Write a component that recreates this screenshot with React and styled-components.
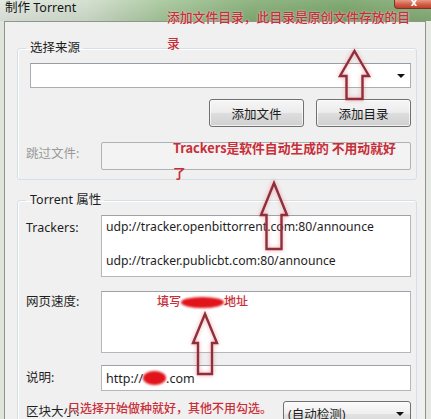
import React from "react";
import styled, { createGlobalStyle } from "styled-components";

const GlobalStyle = createGlobalStyle`
  html, body {
    margin: 0;
    padding: 0;
    background: #f0f0f0;
  }
`;

const UI_FONT = `"Noto Sans", "Noto Sans CJK SC", sans-serif`;
const NOTE_RED = "#c4303a";

// 窗口外框
const Window = styled.div`
  position: relative;
  width: 431px;
  height: 419px;
  overflow: hidden;
  display: flex;
  flex-direction: column;
  background: linear-gradient(90deg, #dfe4dc 0%, #cfd9cb 60%, #e6e9e4 100%);
  font-family: ${UI_FONT};
  font-size: 12px;
  color: #1e1e1e;
`;

const TitleBar = styled.div`
  height: 21px;
  flex-shrink: 0;
  display: flex;
  justify-content: space-between;
  align-items: flex-start;
  background:
    linear-gradient(180deg, rgba(255, 255, 255, 0.12), rgba(0, 0, 0, 0.05)),
    linear-gradient(90deg, #e0e5dd 0%, #cfdccb 20%, #a3c497 38%, #83ac74 58%, #74a164 80%, #84ab77 100%);
`;

const Title = styled.span`
  padding-left: 5px;
  line-height: 16px;
  font-size: 12.5px;
  color: #151515;
`;

const CloseButton = styled.span`
  width: 38px;
  height: 8px;
  margin-right: -3px;
  border: 1px solid #7e3326;
  border-top: none;
  border-radius: 0 0 4px 4px;
  background: linear-gradient(180deg, #e79a86 0%, #cf5a43 60%, #bf412c 100%);
  color: #fff;
  font: bold 10px/6px "DejaVu Sans", sans-serif;
  text-align: center;
  overflow: hidden;
`;

const Client = styled.div`
  flex: 1;
  margin: 0 5px 0 4px;
  border: 1px solid #8c978a;
  border-bottom: none;
  background: #f0f0f0;
  padding: 18px 8px 0 12px;
  display: flex;
  flex-direction: column;
`;

const Group = styled.fieldset`
  margin: ${(p) => (p.$first ? "0" : "12px 0 0")};
  border: 1px solid #d5dfe5;
  border-radius: 3px;
  padding: ${(p) => (p.$first ? "7px 5px 9px 8px" : "7px 5px 0 8px")};
  box-shadow: inset 1px 1px 0 #fff;
  min-width: 0;
`;

const Legend = styled.legend`
  padding: 0 3px 0 4px;
  font-size: 12.5px;
  line-height: 16px;
  color: #1e1e1e;
`;

const ComboBox = styled.div`
  height: 25px;
  margin-left: 4px;
  box-sizing: border-box;
  border: 1px solid #abadb3;
  border-top-color: #9a9ca3;
  background: #fff;
  display: flex;
  align-items: center;
  justify-content: flex-end;
  padding-right: 5px;
`;

const Caret = styled.span`
  width: 0;
  height: 0;
  border-left: 4px solid transparent;
  border-right: 4px solid transparent;
  border-top: 4px solid #111;
`;

const ButtonRow = styled.div`
  margin-top: 11px;
  display: flex;
  justify-content: flex-end;
  gap: 12px;
`;

const Button = styled.div`
  width: 95px;
  height: 28px;
  box-sizing: border-box;
  border: 1px solid #707070;
  border-radius: 3px;
  background: linear-gradient(180deg, #f6f6f6 0%, #ececec 48%, #dddddd 52%, #d0d0d0 100%);
  box-shadow: inset 0 0 0 1px rgba(255, 255, 255, 0.7);
  display: flex;
  align-items: center;
  justify-content: center;
  font-size: 12.5px;
  color: #1b1b1b;
`;

const Row = styled.div`
  margin-top: ${(p) => p.$gap || 0}px;
  display: flex;
  align-items: flex-start;
`;

const Label = styled.div`
  width: 75px;
  flex-shrink: 0;
  padding-top: ${(p) => p.$top || 0}px;
  line-height: 17px;
  font-size: 12.5px;
  color: ${(p) => (p.$disabled ? "#9a9a9a" : "#1e1e1e")};
`;

const DisabledBox = styled.div`
  flex: 1;
  height: 28px;
  box-sizing: border-box;
  border: 1px solid #adb2b5;
  border-radius: 2px;
  background: #f3f3f3;
`;

const TextArea = styled.textarea`
  display: block;
  flex: 1;
  height: ${(p) => p.$h}px;
  box-sizing: border-box;
  margin: 0;
  border: 1px solid #b5b7bd;
  border-top-color: #9fa1a8;
  background: #fff;
  padding: 2px 4px;
  font-family: ${UI_FONT};
  font-size: 12.2px;
  line-height: 17px;
  color: #1e1e1e;
  resize: none;
  overflow: hidden;
  outline: none;
`;

const LineBox = styled.div`
  flex: 1;
  height: 26px;
  box-sizing: border-box;
  border: 1px solid #b5b7bd;
  border-top-color: #9fa1a8;
  background: #fff;
  padding: 0 4px;
  display: flex;
  align-items: center;
  font-size: 12.5px;
`;

const SelectBox = styled.div`
  margin-left: auto;
  width: 128px;
  height: 25px;
  box-sizing: border-box;
  border: 1px solid #707070;
  border-radius: 3px;
  background: linear-gradient(180deg, #fbfbfb 0%, #efefef 50%, #e2e2e2 51%, #d6d6d6 100%);
  display: flex;
  align-items: center;
  justify-content: space-between;
  padding: 0 6px 0 4px;
  font-size: 12.5px;
`;

// 红色涂抹
const Blob = styled.span`
  display: inline-block;
  width: ${(p) => p.$w}px;
  height: ${(p) => p.$h}px;
  border-radius: 50%;
  background: #e0141a;
  filter: blur(0.8px);
  vertical-align: middle;
`;

// 标注文字
const Note = styled.div`
  position: absolute;
  left: ${(p) => p.$x}px;
  top: ${(p) => p.$y}px;
  white-space: nowrap;
  font-family: "Noto Sans CJK SC", "Noto Sans", sans-serif;
  font-size: ${(p) => p.$size || 12.8}px;
  font-weight: ${(p) => (p.$bold ? 700 : 500)};
  line-height: ${(p) => p.$lh || 17}px;
  color: ${NOTE_RED};
  text-shadow: 0 0 2px rgba(255, 235, 235, 0.9);
`;

const ArrowSvg = styled.svg`
  position: absolute;
  left: ${(p) => p.$x}px;
  top: ${(p) => p.$y}px;
  overflow: visible;
  filter: drop-shadow(0 0 2px rgba(235, 120, 130, 0.7));
`;

const UpArrow = ({ x, y, w, h, head, shaft }) => {
  const m = w / 2;
  const s = shaft / 2;
  const d = `M${m} 1 L${w - 1} ${head} L${m + s} ${head} L${m + s} ${h - 1} L${m - s} ${h - 1} L${m - s} ${head} L1 ${head} Z`;
  return (
    <ArrowSvg $x={x} $y={y} width={w} height={h} viewBox={`0 0 ${w} ${h}`}>
      <path d={d} fill="none" stroke="#8e2f3b" strokeWidth="2.4" strokeLinejoin="miter" />
    </ArrowSvg>
  );
};

const trackers =
  "udp://tracker.openbittorrent.com:80/announce\n\nudp://tracker.publicbt.com:80/announce";

export default function App() {
  return (
    <Window>
      <GlobalStyle />
      <TitleBar>
        <Title>制作 Torrent</Title>
        <CloseButton>x</CloseButton>
      </TitleBar>

      <Client>
        <Group $first>
          <Legend>选择来源</Legend>
          <ComboBox>
            <Caret />
          </ComboBox>
          <ButtonRow>
            <Button>添加文件</Button>
            <Button>添加目录</Button>
          </ButtonRow>
          <Row $gap={15}>
            <Label $disabled $top={3}>跳过文件:</Label>
            <DisabledBox />
          </Row>
        </Group>

        <Group>
          <Legend>Torrent 属性</Legend>
          <Row>
            <Label $top={4}>Trackers:</Label>
            <TextArea $h={62} readOnly value={trackers} />
          </Row>
          <Row $gap={14}>
            <Label $top={2}>网页速度:</Label>
            <TextArea $h={62} readOnly value="" />
          </Row>
          <Row $gap={12}>
            <Label $top={4}>说明:</Label>
            <LineBox>
              http://
              <Blob $w={23} $h={14} />
              .com
            </LineBox>
          </Row>
          <Row $gap={10}>
            <Label $top={2}>区块大小:</Label>
            <SelectBox>
              (自动检测)
              <Caret />
            </SelectBox>
          </Row>
        </Group>
      </Client>

      <Note $x={167} $y={4} $lh={26}>
        添加文件目录，此目录是原创文件存放的目
        <br />录
      </Note>
      <Note $x={173} $y={135} $lh={25} $bold>
        Trackers是软件自动生成的 不用动就好
        <br />了
      </Note>
      <Note $x={157} $y={292} $size={12}>
        填写<Blob $w={43} $h={11} />地址
      </Note>
      <Note $x={68} $y={399} $size={12}>
        只选择开始做种就好，其他不用勾选。
      </Note>

      <UpArrow x={339} y={50} w={31} h={50} head={26} shaft={16} />
      <UpArrow x={260} y={182} w={28} h={68} head={33} shaft={15} />
      <UpArrow x={192} y={313} w={26} h={62} head={30} shaft={14} />
    </Window>
  );
}
